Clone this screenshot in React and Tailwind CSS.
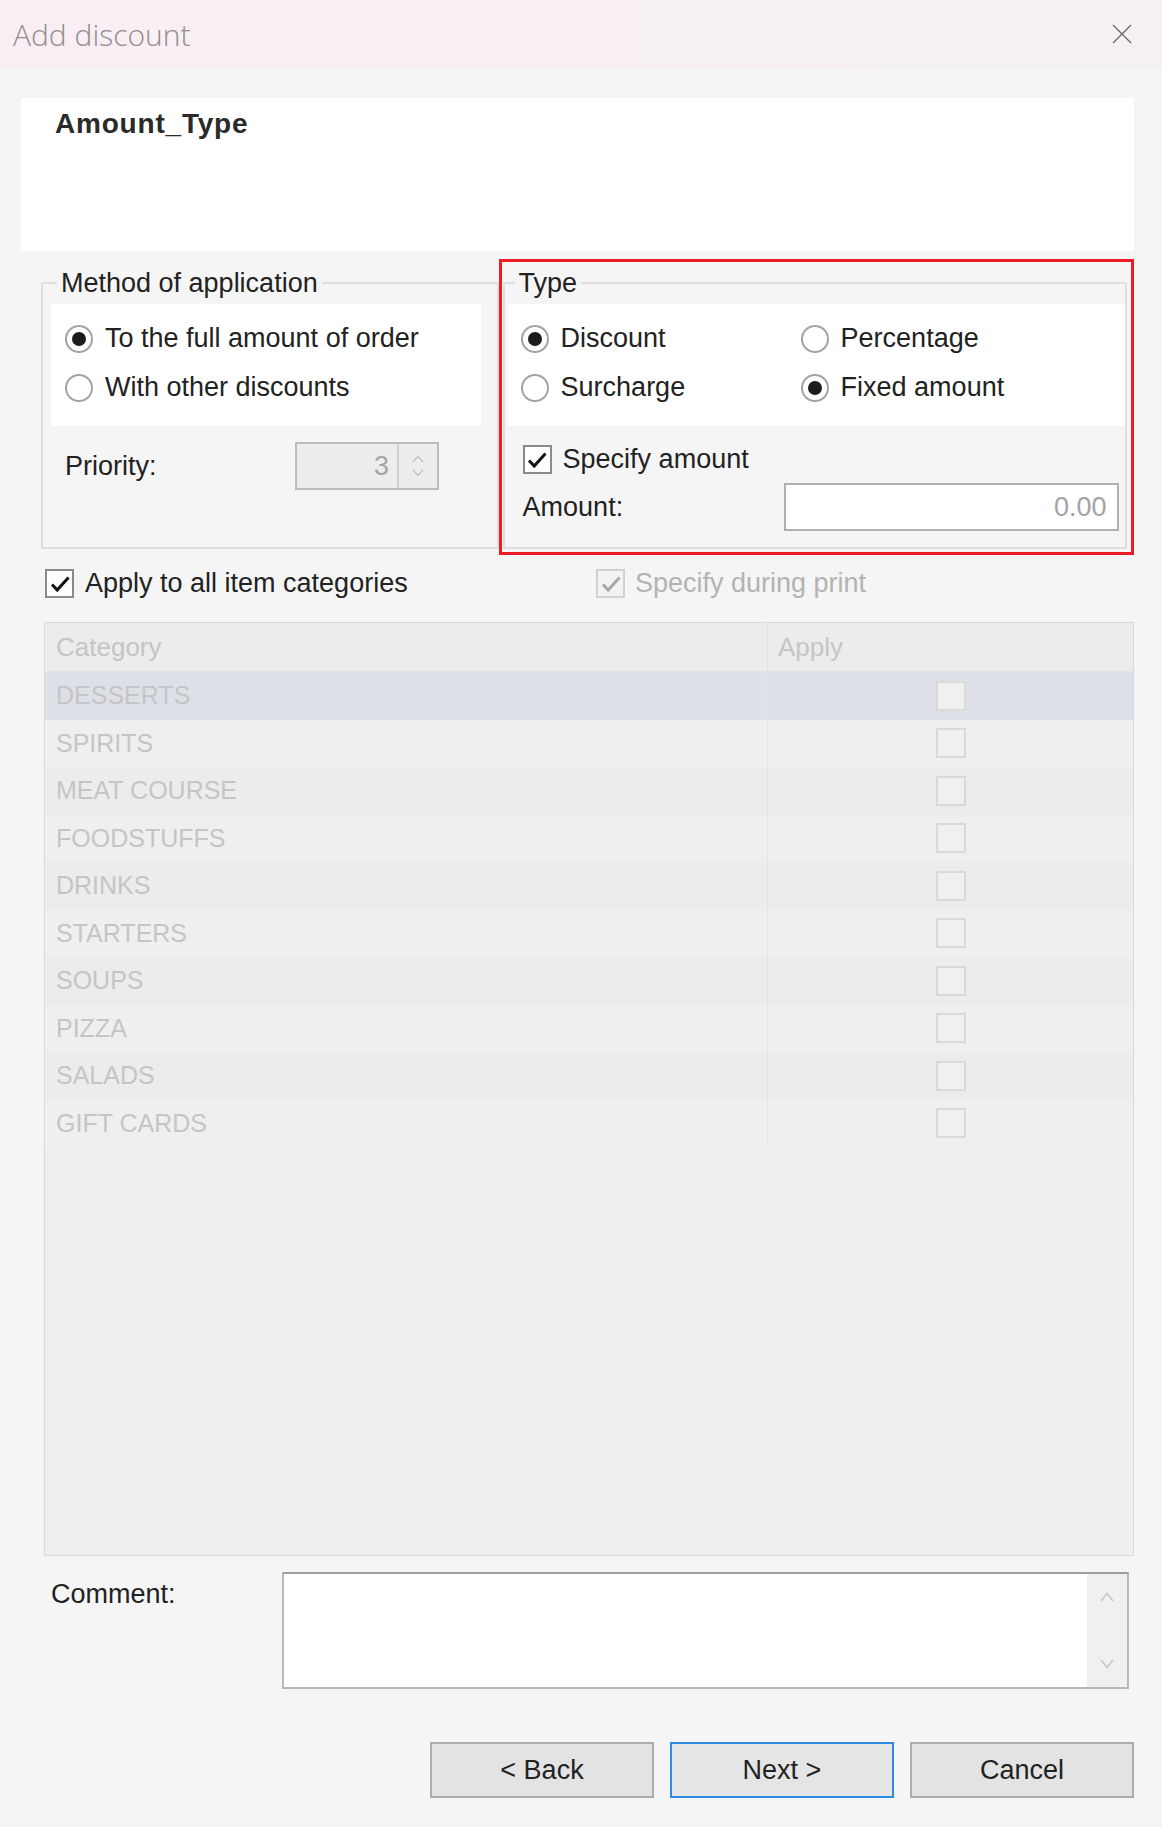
import React from 'react';

const Radio = ({ checked }) => (
  <span className="w-[28px] h-[28px] rounded-full border-2 border-[#a3a3a3] bg-white flex items-center justify-center shrink-0">
    {checked && <span className="w-[14px] h-[14px] rounded-full bg-[#1c1c1c]" />}
  </span>
);

const Check = ({ checked, disabled }) => (
  <span className={`w-[29px] h-[29px] border-2 flex items-center justify-center shrink-0 ${disabled ? 'border-[#d2d2d2] bg-[#f3f3f3]' : 'border-[#8a8a8a] bg-white'}`}>
    {checked && (
      <svg viewBox="0 0 24 24" className="w-[24px] h-[24px]">
        <path d="M4 12.5l5.2 5.5L20.5 5.5" fill="none" stroke={disabled ? '#a9a9a9' : '#111'} strokeWidth="3" />
      </svg>
    )}
  </span>
);

const RadioItem = ({ checked, label, w }) => (
  <div className={`flex items-center gap-[12px] ${w}`}>
    <Radio checked={checked} />
    <span>{label}</span>
  </div>
);

const categories = ['DESSERTS', 'SPIRITS', 'MEAT COURSE', 'FOODSTUFFS', 'DRINKS', 'STARTERS', 'SOUPS', 'PIZZA', 'SALADS', 'GIFT CARDS'];

export default function App() {
  return (
    <div className="w-[1162px] h-[1827px] bg-[#f5f5f5] flex flex-col font-['Liberation_Sans',Arial,sans-serif] text-[27px] leading-[31px] text-[#222] overflow-hidden">
      {/* title bar */}
      <div className="h-[68px] shrink-0 flex items-center justify-between bg-gradient-to-r from-[#f9eef4] to-[#f5f1f2] pl-[13px] pr-[30px]">
        <span className="font-['Open_Sans',sans-serif] font-light text-[30px] text-[#8e8e8e]">Add discount</span>
        <svg viewBox="0 0 20 20" className="w-[20px] h-[20px]">
          <path d="M1 1L19 19M19 1L1 19" stroke="#6a6a6a" strokeWidth="1.4" />
        </svg>
      </div>

      <div className="flex flex-col pl-[21px] pr-[28px]">
        {/* header panel */}
        <div className="mt-[30px] h-[153px] bg-white pl-[34px] pt-[10px]">
          <div className="font-bold leading-[32px] text-[28px] tracking-[0.8px] text-[#2a2a2a]">Amount_Type</div>
        </div>

        {/* groups */}
        <div className="mt-[8px] flex items-start pl-[20px]">
          <fieldset className="mt-[8px] w-[458px] border-2 border-[#dedede]">
            <legend className="ml-[14px] px-[4px] leading-[32px]">Method of application</legend>
            <div className="pl-[8px] pb-[57px]">
              <div className="mt-[5px] w-[430px] bg-white pl-[14px] pt-[10px] pb-[14px]">
                <div className="h-[49px] flex items-center"><RadioItem checked label="To the full amount of order" /></div>
                <div className="h-[49px] flex items-center"><RadioItem label="With other discounts" /></div>
              </div>
              <div className="mt-[16px] h-[48px] flex items-center pl-[14px]">
                <span className="w-[230px]">Priority:</span>
                <div className="w-[144px] h-[48px] border-2 border-[#bdbdbd] bg-[#ededed] flex">
                  <div className="flex-1 flex items-center justify-end pr-[8px] text-[#a6a6a6]">3</div>
                  <div className="w-[40px] border-l-2 border-[#cfcfcf] flex flex-col items-center justify-center gap-[6px]">
                    <svg viewBox="0 0 12 8" className="w-[12px] h-[8px]"><path d="M1 7L6 1.5L11 7" fill="none" stroke="#c4c4c4" strokeWidth="1.5" /></svg>
                    <svg viewBox="0 0 12 8" className="w-[12px] h-[8px]"><path d="M1 1L6 6.5L11 1" fill="none" stroke="#c4c4c4" strokeWidth="1.5" /></svg>
                  </div>
                </div>
              </div>
            </div>
          </fieldset>

          <div className="w-[636px] h-[296px] border-[3px] border-[#ec1c27] overflow-hidden">
            <fieldset className="mt-[5px] ml-[1px] w-[624px] border-2 border-[#dedede]">
              <legend className="ml-[10px] px-[4px] leading-[32px]">Type</legend>
              <div className="pb-[16px]">
                <div className="mt-[5px] ml-[2px] w-[618px] bg-white pl-[14px] pt-[10px] pb-[14px]">
                  <div className="h-[49px] flex items-center">
                    <RadioItem checked label="Discount" w="w-[280px]" />
                    <RadioItem label="Percentage" />
                  </div>
                  <div className="h-[49px] flex items-center">
                    <RadioItem label="Surcharge" w="w-[280px]" />
                    <RadioItem checked label="Fixed amount" />
                  </div>
                </div>
                <div className="mt-[19px] h-[29px] pl-[18px] flex items-center gap-[11px]">
                  <Check checked />
                  <span>Specify amount</span>
                </div>
                <div className="mt-[9px] h-[48px] pl-[18px] flex items-center">
                  <span className="w-[261px]">Amount:</span>
                  <div className="w-[335px] h-[48px] border-2 border-[#b0b0b0] bg-white flex items-center justify-end pr-[10px] text-[#a3a3a3]">0.00</div>
                </div>
              </div>
            </fieldset>
          </div>
        </div>

        {/* apply row */}
        <div className="mt-[14px] h-[29px] flex items-center pl-[24px]">
          <div className="w-[551px] flex items-center gap-[11px]">
            <Check checked />
            <span>Apply to all item categories</span>
          </div>
          <div className="flex items-center gap-[10px] text-[#b3b3b3]">
            <Check checked disabled />
            <span>Specify during print</span>
          </div>
        </div>

        {/* table */}
        <div className="mt-[24px] ml-[23px] h-[934px] border border-[#dadada] bg-[#eeeeee] flex flex-col text-[25px] text-[#c5c5c5]">
          <div className="h-[49px] flex items-center bg-[#ececec] border-b border-[#e3e3e3] shrink-0">
            <div className="w-[723px] pl-[11px] h-full flex items-center border-r border-[#e2e2e2] text-[26px]">Category</div>
            <div className="pl-[10px] text-[26px]">Apply</div>
          </div>
          {categories.map((c, i) => (
            <div key={c} className={`h-[47.5px] flex items-center shrink-0 ${i === 0 ? 'bg-[#dde0e7]' : i % 2 ? 'bg-[#efefef]' : 'bg-[#ececec]'}`}>
              <div className="w-[723px] pl-[11px] h-full flex items-center border-r border-[#e4e4e4]">{c}</div>
              <div className="flex-1 flex items-center justify-center">
                <span className="w-[30px] h-[30px] border-2 border-[#d9d9d9] bg-[#f0f0f0]" />
              </div>
            </div>
          ))}
        </div>

        {/* comment */}
        <div className="mt-[16px] flex pl-[30px]">
          <span className="w-[231px] pt-[6px] leading-[32px]">Comment:</span>
          <div className="w-[847px] h-[117px] border-2 border-[#b8b8b8] border-t-[#9d9d9d] bg-white flex justify-end">
            <div className="w-[40px] h-full bg-[#f0f0f0] flex flex-col items-center justify-between py-[18px]">
              <svg viewBox="0 0 14 10" className="w-[14px] h-[10px]"><path d="M1 9L7 1.5L13 9" fill="none" stroke="#c6c6c6" strokeWidth="1.6" /></svg>
              <svg viewBox="0 0 14 10" className="w-[14px] h-[10px]"><path d="M1 1L7 8.5L13 1" fill="none" stroke="#c6c6c6" strokeWidth="1.6" /></svg>
            </div>
          </div>
        </div>

        {/* buttons */}
        <div className="mt-[53px] flex justify-end gap-[16px]">
          <button className="w-[224px] h-[56px] bg-[#e3e3e3] border-2 border-[#adadad] text-[#222]">&lt; Back</button>
          <button className="w-[224px] h-[56px] bg-[#e5e5e5] border-2 border-[#2f8ae6] text-[#222]">Next &gt;</button>
          <button className="w-[224px] h-[56px] bg-[#e3e3e3] border-2 border-[#adadad] text-[#222]">Cancel</button>
        </div>
      </div>
    </div>
  );
}
